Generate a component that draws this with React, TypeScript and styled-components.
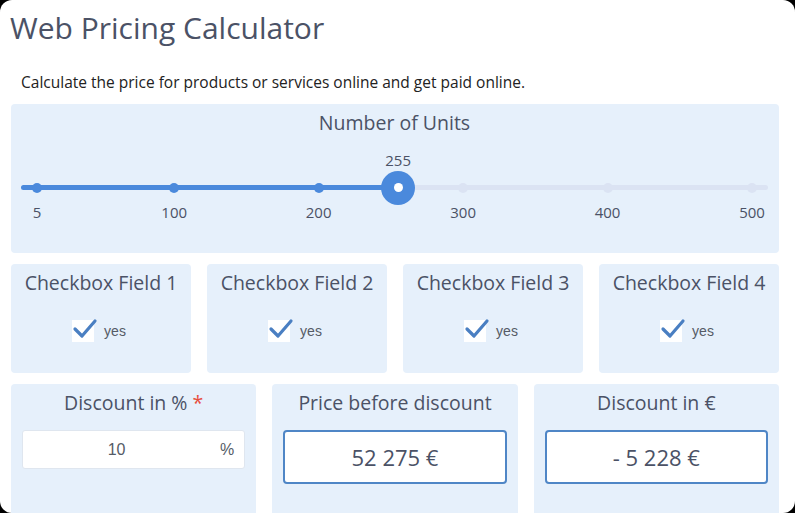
import styled, { createGlobalStyle } from "styled-components";

const GlobalStyle = createGlobalStyle`
  html, body {
    margin: 0;
    padding: 0;
    background: #000;
  }
  * {
    box-sizing: border-box;
  }
`;

const FONT = `"Open Sans", "Noto Sans", sans-serif`;
const TEXT = "#4b5266";
const PANEL = "#e6f0fb";
const BLUE = "#4a89dc";

const Page = styled.div`
  height: 100vh;
  overflow: hidden;
  background: #fff;
  border-radius: 12px;
  padding: 0 16px 0 11px;
  font-family: ${FONT};
  color: ${TEXT};
`;

const Title = styled.h1`
  margin: 0;
  padding: 8px 0 0 0;
  margin-left: -1px;
  font-size: 30px;
  font-weight: 400;
  line-height: 40px;
  letter-spacing: 0;
  color: ${TEXT};
`;

const Intro = styled.p`
  margin: 24px 0 0 10px;
  font-size: 15.5px;
  line-height: 20px;
  color: #222;
`;

const Panel = styled.section`
  background: ${PANEL};
  border-radius: 4px;
  display: flex;
  flex-direction: column;
  align-items: center;
`;

const SliderPanel = styled(Panel)`
  margin-top: 12px;
  height: 149px;
  padding: 6px 11px 0 10px;
  align-items: stretch;
`;

const PanelTitle = styled.h2`
  margin: 0;
  font-size: 19.5px;
  font-weight: 400;
  line-height: 26px;
  text-align: center;
  color: ${TEXT};
`;

const SliderBox = styled.div`
  position: relative;
  height: 100px;
`;

const Track = styled.div`
  position: absolute;
  left: 0;
  right: 0;
  top: 49px;
  height: 5px;
  border-radius: 3px;
  background: #dbe3f3;
`;

const Fill = styled.div`
  position: absolute;
  left: 0;
  top: 49px;
  height: 5px;
  border-radius: 3px;
  background: ${BLUE};
`;

const Dot = styled.div<{ $on: boolean }>`
  position: absolute;
  top: 51.5px;
  width: 10px;
  height: 10px;
  margin: -5px 0 0 -5px;
  border-radius: 50%;
  background: ${({ $on }) => ($on ? BLUE : "#dbe3f3")};
`;

const TickLabel = styled.span`
  position: absolute;
  top: 66px;
  transform: translateX(-50%);
  font-size: 15px;
  line-height: 20px;
  color: ${TEXT};
`;

const Thumb = styled.div`
  position: absolute;
  top: 51.5px;
  width: 34px;
  height: 34px;
  margin: -17px 0 0 -17px;
  border-radius: 50%;
  background: ${BLUE};
  display: flex;
  align-items: center;
  justify-content: center;

  &::after {
    content: "";
    width: 9px;
    height: 9px;
    border-radius: 50%;
    background: #fff;
  }
`;

const ValueLabel = styled.span`
  position: absolute;
  top: 14px;
  transform: translateX(-50%);
  font-size: 15px;
  line-height: 20px;
  color: ${TEXT};
`;

const Row = styled.div<{ $cols: number }>`
  display: grid;
  grid-template-columns: repeat(${({ $cols }) => $cols}, 1fr);
  gap: 16px;
  margin-top: 11px;
`;

const CheckCard = styled(Panel)`
  height: 109px;
  padding-top: 6px;
`;

const CheckLine = styled.label`
  display: flex;
  align-items: center;
  gap: 10px;
  margin-top: 24px;
  margin-left: -4px;
  font-family: "Liberation Sans", Arial, sans-serif;
  font-size: 14px;
  color: #555b66;
`;

const Box = styled.span`
  position: relative;
  width: 22px;
  height: 22px;
  background: #fff;

  svg {
    position: absolute;
    left: 0;
    top: -3px;
  }
`;

const FieldCard = styled(Panel)`
  height: 140px;
  padding: 6px 11px 0 11px;
  align-items: stretch;
`;

const InputBox = styled.div`
  margin-top: 14px;
  height: 39px;
  background: #fff;
  border: 1px solid #dfe6ef;
  border-radius: 3px;
  display: flex;
  align-items: center;
  font-family: "Liberation Sans", Arial, sans-serif;
  font-size: 16px;
  color: #555b66;
`;

const InputValue = styled.span`
  flex: 1;
  text-align: center;
  padding-right: 10px;
`;

const Unit = styled.span`
  padding-right: 10px;
`;

const Required = styled.span`
  color: #e74c3c;
`;

const Output = styled.div`
  margin-top: 14px;
  height: 54px;
  background: #fff;
  border: 2px solid #4f86c6;
  border-radius: 4px;
  display: flex;
  align-items: center;
  justify-content: center;
  font-size: 22px;
  color: ${TEXT};
`;

const MIN = 5;
const MAX = 500;
const VALUE = 255;
const ticks = [5, 100, 200, 300, 400, 500];

const pos = (v: number) =>
  `calc(16px + ${(v - MIN) / (MAX - MIN)} * (100% - 32px))`;

function Check() {
  return (
    <Box>
      <svg width="26" height="24" viewBox="0 0 26 24">
        <path
          d="M3 12 L10 19 L23 4"
          fill="none"
          stroke="#4a7fc2"
          strokeWidth="3.2"
          strokeLinecap="round"
          strokeLinejoin="round"
        />
      </svg>
    </Box>
  );
}

export default function App() {
  return (
    <>
      <GlobalStyle />
      <Page>
        <Title>Web Pricing Calculator</Title>
        <Intro>
          Calculate the price for products or services online and get paid
          online.
        </Intro>

        <SliderPanel>
          <PanelTitle>Number of Units</PanelTitle>
          <SliderBox>
            <Track />
            <Fill style={{ width: pos(VALUE) }} />
            {ticks.map((t) => (
              <Dot key={t} $on={t <= VALUE} style={{ left: pos(t) }} />
            ))}
            {ticks.map((t) => (
              <TickLabel key={`l${t}`} style={{ left: pos(t) }}>
                {t}
              </TickLabel>
            ))}
            <ValueLabel style={{ left: pos(VALUE) }}>{VALUE}</ValueLabel>
            <Thumb style={{ left: pos(VALUE) }} />
          </SliderBox>
        </SliderPanel>

        <Row $cols={4}>
          {[1, 2, 3, 4].map((n) => (
            <CheckCard key={n}>
              <PanelTitle>Checkbox Field {n}</PanelTitle>
              <CheckLine>
                <Check />
                yes
              </CheckLine>
            </CheckCard>
          ))}
        </Row>

        <Row $cols={3}>
          <FieldCard>
            <PanelTitle>
              Discount in % <Required>*</Required>
            </PanelTitle>
            <InputBox>
              <InputValue>10</InputValue>
              <Unit>%</Unit>
            </InputBox>
          </FieldCard>
          <FieldCard>
            <PanelTitle>Price before discount</PanelTitle>
            <Output>52 275 €</Output>
          </FieldCard>
          <FieldCard>
            <PanelTitle>Discount in €</PanelTitle>
            <Output>- 5 228 €</Output>
          </FieldCard>
        </Row>
      </Page>
    </>
  );
}
